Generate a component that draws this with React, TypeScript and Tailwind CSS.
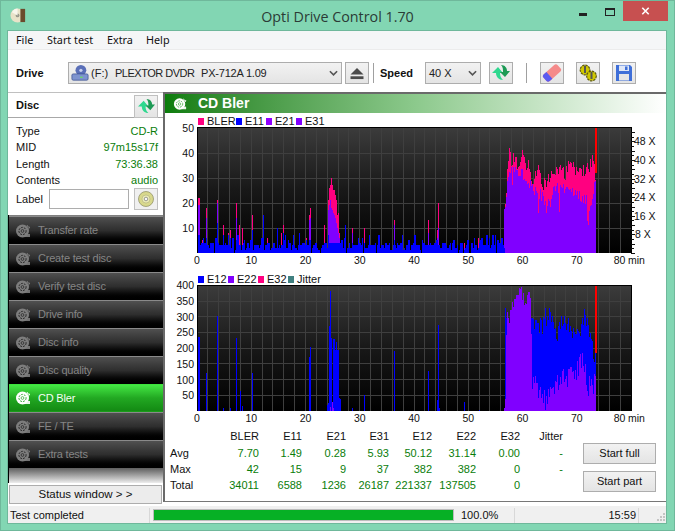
import React from 'react';

const UI_FONT = { fontFamily: '"Liberation Sans", Arial, sans-serif' };

// Plot is 434px wide, one column per pixel. x is a screen coordinate.
const PLOT_LEFT = 197;
const PLOT_W = 434;

function makeRandom(seed: number) {
  let s = seed;
  return () => {
    s = (s * 1664525 + 1013904223) % 4294967296;
    return s / 4294967296;
  };
}

function lerp(points: number[][], x: number) {
  for (let i = 1; i < points.length; i++) {
    if (x <= points[i][0]) {
      const [x0, y0] = points[i - 1];
      const [x1, y1] = points[i];
      return y0 + ((y1 - y0) * (x - x0)) / (x1 - x0);
    }
  }
  return points[points.length - 1][1];
}

// Left half of each graph was read off at 165 + zx / 3, right half at 425 + zx / 3
const L = (zx: number) => Math.round(165 + zx / 3 - PLOT_LEFT);
const R = (zx: number) => Math.round(425 + zx / 3 - PLOT_LEFT);

function blankSeries() {
  return new Array(PLOT_W).fill(0) as number[];
}

function put(series: number[], col: number, value: number) {
  if (col >= 0 && col < PLOT_W) series[col] = Math.max(series[col], value);
}

function buildBler() {
  const rand = makeRandom(41);
  const pink = blankSeries();
  const purple = blankSeries();
  const blue = blankSeries();
  const end = R(238);
  for (let c = 0; c < end; c += 1) {
    const r = rand();
    const v = r < 0.08 ? 0 : r < 0.55 ? 1 + rand() * 2 : r < 0.9 ? 3 + rand() : 5 + rand() * 2;
    put(blue, c, Math.round(v));
    if (rand() > 0.5) put(blue, c + 1, Math.round(v));
  }
  const spikes: number[][] = [
    [100, 22, 19, 7], [103, 22, 19, 7], [112, 5, 2, 2], [124, 18, 14, 6], [155, 16, 12, 12], [157, 21, 20, 6],
    [175, 11, 3, 7], [182, 3, 2, 3], [190, 8, 3, 7], [196, 9, 5, 6], [212, 9, 7, 5], [214, 20, 14, 5],
    [223, 11, 2, 3], [232, 10, 2, 3], [260, 15, 9, 9], [295, 5, 2, 15], [307, 6, 2, 4], [335, 4, 2, 10],
    [347, 8, 2, 3], [355, 11, 3, 8], [385, 3, 2, 7], [403, 3, 2, 8], [423, 6, 2, 5], [433, 15, 13, 5],
    [436, 18, 14, 5], [478, 11, 3, 4], [540, 3, 2, 11], [560, 10, 8, 4], [580, 3, 2, 6], [598, 10, 2, 4],
    [688, 13, 11, 5], [712, 3, 2, 7],
  ];
  spikes.forEach(([zx, a, b, c]) => {
    put(pink, L(zx), a);
    put(purple, L(zx), b);
    put(blue, L(zx), c);
  });
  const hump = [[489, 21, 17], [492, 26, 19], [495, 27, 21], [498, 30, 18], [501, 27, 17], [504, 25, 16], [507, 25, 15], [510, 23, 14], [513, 21, 12], [516, 15, 10], [519, 16, 8], [522, 8, 6]];
  hump.forEach(([zx, a, b]) => {
    put(pink, L(zx), a);
    put(purple, L(zx), b);
    put(blue, L(zx), 4);
  });
  [[10, 13, 8], [40, 20, 10], [37, 9, 6], [118, 4, 2], [160, 6, 2]].forEach(([zx, a, b]) => {
    put(pink, R(zx), a);
    put(purple, R(zx), b);
  });
  const pinkEnv = [[238, 18], [242, 23], [247, 33], [253, 42], [258, 38], [270, 38], [280, 37], [290, 40], [300, 37], [315, 34], [322, 30], [330, 33], [345, 33], [355, 27], [365, 30], [380, 33], [395, 32], [410, 37], [420, 32], [440, 38], [450, 34], [470, 33], [485, 33], [500, 38], [510, 32]];
  const purpleEnv = [[238, 17], [250, 32], [280, 33], [300, 30], [320, 26], [330, 24], [350, 23], [365, 17], [380, 24], [400, 26], [430, 25], [450, 23], [480, 22], [500, 17], [508, 27], [512, 31]];
  for (let zx = 238; zx <= 512; zx += 3) {
    put(pink, R(zx), lerp(pinkEnv, zx) + (rand() - 0.6) * 6);
    const dip = rand() > 0.9 ? rand() * 9 : 0;
    put(purple, R(zx), lerp(purpleEnv, zx) + (rand() - 0.5) * 5 - dip);
  }
  return { pink, purple, blue };
}

function buildE12() {
  const rand = makeRandom(77);
  const blue = blankSeries();
  const purple = blankSeries();
  const spikes = [[100, 237], [103, 237], [124, 122], [157, 303], [175, 8], [196, 8], [213, 232], [224, 65], [232, 15], [260, 122], [433, 172], [436, 205], [486, 20], [489, 25], [491, 270], [494, 370], [496, 382], [499, 232], [503, 230], [507, 228], [510, 195], [513, 220], [516, 195], [519, 195], [522, 40], [525, 38], [562, 8], [598, 52], [688, 190]];
  spikes.forEach(([zx, v]) => put(blue, L(zx), v));
  [[495, 12], [502, 30], [505, 8]].forEach(([zx, v]) => put(purple, L(zx), v));
  [[10, 128], [37, 35], [40, 275], [43, 8], [118, 28], [163, 2]].forEach(([zx, v]) => put(blue, R(zx), v));
  const purpleEnv = [[238, 20], [242, 40], [245, 330], [250, 290], [265, 345], [275, 370], [290, 380], [300, 350], [315, 375], [318, 320], [320, 105], [335, 80], [350, 50], [365, 20], [380, 70], [400, 95], [420, 105], [440, 110], [460, 140], [470, 170], [490, 80], [510, 85]];
  const blueEnv = [[238, 30], [241, 335], [250, 300], [316, 300], [318, 300], [330, 290], [345, 270], [372, 320], [385, 270], [400, 260], [420, 290], [440, 270], [460, 230], [472, 320], [490, 260], [510, 185]];
  for (let zx = 238; zx <= 512; zx += 3) {
    put(purple, R(zx), lerp(purpleEnv, zx) + (rand() - 0.5) * (zx < 318 ? 40 : 70));
    if (zx < 250 || zx > 316) put(blue, R(zx), lerp(blueEnv, zx) + (rand() - 0.6) * 70);
  }
  return { blue, purple };
}

const bler = buildBler();
const e12 = buildE12();

function barsPath(series: number[], x0: number, base: number, scale: number) {
  let d = '';
  series.forEach((v, c) => {
    if (v > 0) {
      const h = Math.round(v * scale);
      d += `M${x0 + c} ${base - h}h1v${h}h-1z`;
    }
  });
  return d;
}

interface GraphProps {
  height: number;
  top: number;
  bottom: number;
  yTicks: { label: string; value: number }[];
  scale: number;
  gridStep: number;
  speedAxis?: boolean;
  series: { color: string; data: number[] }[];
  redTo: number;
  gradientId: string;
}

function Graph({ height, top, bottom, yTicks, scale, gridStep, speedAxis, series, redTo, gradientId }: GraphProps) {
  const x0 = PLOT_LEFT - 165;
  const xAt = (min: number) => x0 + (min * PLOT_W) / 80;
  const vertical = Array.from({ length: 39 }, (_, i) => (i + 1) * 2);
  const horizontal: number[] = [];
  for (let y = bottom - gridStep; y > top + 2; y -= gridStep) horizontal.push(y);
  return (
    <svg width={501} height={height} className="block overflow-visible" style={{ fontFamily: '"Liberation Sans", Arial, sans-serif' }}>
      <defs>
        <linearGradient id={gradientId} x1="0" y1="0" x2="0" y2="1">
          <stop offset="0" stopColor="#3c3c3c" />
          <stop offset="0.5" stopColor="#181818" />
          <stop offset="1" stopColor="#000000" />
        </linearGradient>
      </defs>
      <rect x={x0} y={top} width={PLOT_W} height={bottom - top} fill={`url(#${gradientId})`} />
      <g stroke="#3f3f3f" strokeWidth="1" shapeRendering="crispEdges">
        {vertical.map(m => <line key={m} x1={xAt(m)} x2={xAt(m)} y1={top} y2={bottom} />)}
        {horizontal.map(y => <line key={y} x1={x0} x2={x0 + PLOT_W} y1={y} y2={y} />)}
      </g>
      <g shapeRendering="crispEdges">
        {series.map(s => <path key={s.color} d={barsPath(s.data, x0, bottom, scale)} fill={s.color} />)}
        <rect x={x0 + 398} y={top} width={2} height={redTo - top} fill="#ff0000" />
        <line x1={x0} x2={x0 + PLOT_W} y1={top} y2={top} stroke="#000" />
        <line x1={x0} x2={x0} y1={top} y2={bottom} stroke="#000" />
        <line x1={x0 + PLOT_W} x2={x0 + PLOT_W} y1={top} y2={bottom} stroke="#000" />
      </g>
      {yTicks.map(t => (
        <text key={t.label} x={x0 - 3} y={bottom - t.value * scale + 4} textAnchor="end" fontSize="10.5" fill="#111">{t.label}</text>
      ))}
      {[0, 10, 20, 30, 40, 50, 60, 70].map(m => (
        <text key={m} x={xAt(m)} y={bottom + 11} textAnchor="middle" fontSize="10.5" fill="#111">{m}</text>
      ))}
      <text x={xAt(80) - 11.5} y={bottom + 11} fontSize="10.5" fill="#111" textAnchor="middle">80</text>
      <text x={xAt(80) + 5.5} y={bottom + 11} fontSize="10.5" fill="#111" textAnchor="middle">min</text>
      {speedAxis && (
        <g>
          <g stroke="#111" shapeRendering="crispEdges">
            {Array.from({ length: 27 }, (_, i) => {
              const y = Math.round(bottom - i * 4.65);
              return <line key={i} x1={x0 + PLOT_W} x2={x0 + PLOT_W + (i % 2 === 0 ? 4 : 3)} y1={y} y2={y} />;
            })}
          </g>
          {[8, 16, 24, 32, 40, 48].map(v => (
            <text key={v} x={x0 + PLOT_W + (v === 8 ? 4 : 3)} y={bottom - v * 2.325 + 4} fontSize="10.5" fill="#111">{v} X</text>
          ))}
        </g>
      )}
    </svg>
  );
}

function Legend({ items }: { items: { label: string; color: string; width: number }[] }) {
  return (
    <div className="flex h-[12px] items-center pl-[33px] text-[11px] text-[#111]">
      {items.map(item => (
        <div key={item.label} className="flex items-center" style={{ width: item.width }}>
          <span className="mr-[3px] h-[7px] w-[6px]" style={{ backgroundColor: item.color }} />
          <span>{item.label}</span>
        </div>
      ))}
    </div>
  );
}

function DiscIcon({ tone, className }: { tone: 'grey' | 'white'; className?: string }) {
  const main = tone === 'white' ? '#ffffff' : '#7d7d7d';
  const inner = tone === 'white' ? '#3fae3f' : '#2a2a2a';
  return (
    <svg viewBox="0 0 16 16" className={className}>
      <circle cx="7.5" cy="8" r="6.5" fill={main} />
      <circle cx="7.5" cy="8" r="3.6" fill="none" stroke={inner} strokeWidth="1" strokeDasharray="2 1" />
      <circle cx="7.5" cy="8" r="1.4" fill={main} stroke={inner} strokeWidth="0.8" />
      <path d="M10 11h5v3h-5z" fill={main} opacity="0.9" />
      <path d="M12 2l1 2 2 .3-1.5 1.4" fill="none" stroke={main} strokeWidth="1" />
    </svg>
  );
}

function RefreshArrows({ className }: { className?: string }) {
  return (
    <svg viewBox="0 0 20 18" className={className}>
      <path d="M1 9L7 3L12 9H9C9 12 10 14 12 16C8 16 5 13 5 9Z" fill="#2fd88f" />
      <path d="M10 1C14 1 16 4 16 7H19L14 13L9 8H12C12 5 12 3 10 1Z" fill="#1d9a55" />
    </svg>
  );
}

function ToolButton({ children, className }: { children: React.ReactNode; className?: string }) {
  return (
    <button className={`flex h-[21px] w-[24px] items-center justify-center border border-[#adadad] bg-gradient-to-b from-[#f2f2f2] to-[#e4e4e4] ${className ?? ''}`}>
      {children}
    </button>
  );
}

function Chevron() {
  return (
    <svg viewBox="0 0 10 6" className="h-[6px] w-[9px]">
      <path d="M1 1l4 4 4-4" fill="none" stroke="#555" strokeWidth="1.800" />
    </svg>
  );
}

const navItems = ['Transfer rate', 'Create test disc', 'Verify test disc', 'Drive info', 'Disc info', 'Disc quality', 'CD Bler', 'FE / TE', 'Extra tests'];

const statRows = [
  ['', 'BLER', 'E11', 'E21', 'E31', 'E12', 'E22', 'E32', 'Jitter'],
  ['Avg', '7.70', '1.49', '0.28', '5.93', '50.12', '31.14', '0.00', '-'],
  ['Max', '42', '15', '9', '37', '382', '382', '0', '-'],
  ['Total', '34011', '6588', '1236', '26187', '221337', '137505', '0', ''],
];

export default function App() {
  return (
    <div className="flex h-[531px] w-[675px] flex-col overflow-hidden border border-[#6fb89b] bg-[#82d6b3] text-[11px] text-[#111]" style={UI_FONT}>
      {/* Title bar */}
      <div className="relative flex h-[29px] shrink-0 items-center justify-center">
        <svg viewBox="0 0 18 18" className="absolute left-[9px] top-[5px] h-[18px] w-[17px]">
          <circle cx="8" cy="9.500" r="7.500" fill="#e8e2c8" />
          <path d="M11 2.500h5v14h-5z" fill="#6a4a2c" />
          <circle cx="8" cy="9.500" r="2" fill="#9a9a8c" />
          <path d="M8 2a7.500 7.500 0 0 0-6 4l6 3.500z" fill="#f8f6ec" />
        </svg>
        <span className="mt-[2px] text-[14.3px] text-[#2b3b36]" style={{ fontFamily: '"Open Sans", sans-serif' }}>Opti Drive Control 1.70</span>
        <div className="absolute right-[6px] top-0 flex items-start">
          <span className="mr-[18px] mt-[12px] h-[3px] w-[8px] bg-[#222]" />
          <span className="mr-[8px] mt-[7px] h-[8px] w-[10px] border border-t-2 border-[#222]" />
          <div className="flex h-[20px] w-[45px] items-center justify-center bg-[#c75050]">
            <svg viewBox="0 0 10 10" className="h-[8px] w-[9px]">
              <path d="M1 1l8 8M9 1l-8 8" stroke="#fff" strokeWidth="2" />
            </svg>
          </div>
        </div>
      </div>

      {/* Client area */}
      <div className="ml-[6px] mr-[7px] flex min-h-0 flex-1 flex-col border border-[#6fb89b] bg-white">
        {/* Menu */}
        <div className="flex h-[19px] shrink-0 items-center border-b border-[#ececec] bg-[#f5f6f7] pl-[8px] text-[10.8px]" style={{ fontFamily: '"Noto Sans", sans-serif' }}>
          <span className="w-[31px]">File</span>
          <span className="w-[60px]">Start test</span>
          <span className="w-[39px]">Extra</span>
          <span>Help</span>
        </div>

        {/* Toolbar */}
        <div className="flex h-[42px] shrink-0 items-center pl-[8px] pt-[4px]">
          <span className="w-[52px] font-bold">Drive</span>
          <div className="flex h-[22px] w-[274px] items-center border border-[#adadad] bg-gradient-to-b from-[#f2f2f2] to-[#e4e4e4] pl-[2px] pr-[3px]">
            <svg viewBox="0 0 20 20" className="mr-[2px] h-[18px] w-[18px]">
              <circle cx="11" cy="7" r="6" fill="#5a6fb8" />
              <circle cx="11" cy="7" r="1.800" fill="#c7d0ee" />
              <rect x="1" y="11" width="18" height="7" rx="1.500" fill="#7d93cf" stroke="#3b4f8e" strokeWidth="0.800" />
              <rect x="10" y="14" width="3" height="1.500" fill="#6ad66a" />
            </svg>
            <span className="w-[24px] text-[#222]">(F:)</span>
            <span className="w-[86px] tracking-[-0.5px] text-[#222]">PLEXTOR DVDR</span>
            <span className="flex-1 tracking-[-0.2px] text-[#222]">PX-712A 1.09</span>
            <Chevron />
          </div>
          <ToolButton className="ml-[3px] h-[22px]">
            <svg viewBox="0 0 16 14" className="h-[13px] w-[16px]">
              <path d="M8 1l7 7H1z" fill="#4a4a4a" />
              <rect x="1" y="10" width="14" height="3" fill="#4a4a4a" />
            </svg>
          </ToolButton>
          <span className="ml-[4px] h-[20px] w-[1px] bg-[#a0a0a0]" />
          <span className="ml-[6px] w-[45px] font-bold">Speed</span>
          <div className="flex h-[22px] w-[56px] items-center justify-between border border-[#adadad] bg-gradient-to-b from-[#f2f2f2] to-[#e4e4e4] pl-[3px] pr-[3px] text-[#222]">
            <span>40 X</span>
            <Chevron />
          </div>
          <ToolButton className="ml-[8px] h-[22px]"><RefreshArrows className="h-[18px] w-[20px]" /></ToolButton>
          <span className="ml-[13px] h-[20px] w-[1px] bg-[#a0a0a0]" />
          <ToolButton className="ml-[13px] h-[22px]">
            <svg viewBox="0 0 20 18" className="h-[18px] w-[20px]">
              <g transform="rotate(-42 10 9)">
                <rect x="0.500" y="4.500" width="19" height="9" rx="2.500" fill="#f58a8a" />
                <path d="M3 4.500h3.500v9H3a2.500 2.500 0 0 1-2.500-2.500V7A2.500 2.500 0 0 1 3 4.500z" fill="#5a5af0" />
              </g>
            </svg>
          </ToolButton>
          <ToolButton className="ml-[12px] h-[22px]">
            <svg viewBox="0 0 20 18" className="h-[18px] w-[20px]">
              <circle cx="7" cy="6" r="4.800" fill="#d0c800" stroke="#5e5a10" strokeWidth="1.200" strokeDasharray="2.400 0.800" />
              <circle cx="13.500" cy="12" r="4.800" fill="#d0c800" stroke="#5e5a10" strokeWidth="1.200" strokeDasharray="2.400 0.800" />
              <rect x="6" y="2" width="2" height="7" fill="#555" />
              <rect x="12.500" y="8" width="2" height="7" fill="#555" />
            </svg>
          </ToolButton>
          <ToolButton className="ml-[12px] h-[22px]">
            <svg viewBox="0 0 18 18" className="h-[18px] w-[18px]">
              <path d="M1 1h14l2 2v14H1z" fill="#3f6fd8" />
              <rect x="4" y="1.500" width="10" height="5.500" fill="#dfe7f7" />
              <rect x="10" y="2.500" width="2.500" height="3.500" fill="#3f6fd8" />
              <rect x="4" y="10" width="10" height="6.500" fill="#e6e6e6" />
            </svg>
          </ToolButton>
        </div>

        {/* Body */}
        <div className="flex min-h-0 flex-1">
          {/* Left column */}
          <div className="flex w-[155px] shrink-0 flex-col">
            <div className="flex-1 border-t border-[#c0c0c0]">
              <div className="flex h-[25px] items-center justify-between border-b border-[#a8a8a8] pl-[8px] pr-[5px]">
                <span className="font-bold">Disc</span>
                <ToolButton className="mt-[2px] h-[23px] w-[24px] border-[#c0c0c0]"><RefreshArrows className="h-[17px] w-[19px]" /></ToolButton>
              </div>
              <div className="flex flex-col pl-[8px] pr-[5px] pt-[5px]">
                {[
                  ['Type', 'CD-R'],
                  ['MID', '97m15s17f'],
                  ['Length', '73:36.38'],
                  ['Contents', 'audio'],
                ].map(([k, v]) => (
                  <div key={k} className="flex h-[16.300px] items-center justify-between">
                    <span>{k}</span>
                    <span className="text-[#0a7d0a]">{v}</span>
                  </div>
                ))}
                <div className="flex items-center">
                  <span className="w-[33px]">Label</span>
                  <span className="h-[20px] w-[81px] border border-[#adadad] bg-white" />
                  <button className="ml-[5px] flex h-[22px] w-[24px] items-center justify-center border border-[#c0c0c0] bg-[#f0f0f0]">
                    <svg viewBox="0 0 16 16" className="h-[16px] w-[16px]">
                      <circle cx="8" cy="8" r="7.500" fill="#d8d88c" stroke="#8a8a60" strokeWidth="0.700" />
                      <circle cx="8" cy="8" r="4" fill="#eeeeb8" stroke="#a0a070" strokeWidth="0.500" />
                      <circle cx="8" cy="8" r="1.800" fill="#f8f8f8" stroke="#777" strokeWidth="0.700" />
                    </svg>
                  </button>
                </div>
              </div>
            </div>
            <div className="border-l border-black bg-[#808080] pt-[1px]">
              {navItems.map(name => {
                const active = name === 'CD Bler';
                return (
                  <div
                    key={name}
                    className={
                      active
                        ? 'flex h-[28px] items-center border-b border-t border-[#1a9c1a] border-t-[#3ce33c] bg-gradient-to-b from-[#44e844] via-[#22a822] to-[#138a13] pl-[6px] text-[#f4fff4]'
                        : 'flex h-[28px] items-center border-t border-[#8a8a8a] bg-gradient-to-b from-[#505050] via-[#2e2e2e] to-[#000000] pl-[6px] text-[#858585]'
                    }
                  >
                    <DiscIcon tone={active ? 'white' : 'grey'} className="mr-[7px] h-[16px] w-[16px] shrink-0" />
                    <span className="tracking-[-0.2px]">{name}</span>
                  </div>
                );
              })}
              <div className="h-[15px] bg-gradient-to-b from-[#5f5f5f] to-[#eeeeee]" />
            </div>
            <div className="bg-white px-[1px] pb-[2px] pt-[2px]">
              <button className="h-[19px] w-[153px] border border-[#adadad] bg-[#ececec] text-[11.5px] text-[#111]">Status window &gt; &gt;</button>
            </div>
          </div>

          {/* Graph panel */}
          <div className="mb-[4px] flex min-w-0 flex-1 flex-col border-b border-l-2 border-t-2 border-[#6a6a6a] border-b-[#777]">
            <div className="flex h-[19px] shrink-0 items-center bg-gradient-to-r from-[#0a7d0a] via-[#8cc98c] to-white pl-[8px]">
              <DiscIcon tone="white" className="h-[14px] w-[14px]" />
              <span className="ml-[11px] text-[14px] font-bold text-white">CD Bler</span>
            </div>
            <div className="pt-[2px]">
              <Legend items={[
                { label: 'BLER', color: '#ff0080', width: 38 },
                { label: 'E11', color: '#0000ff', width: 30 },
                { label: 'E21', color: '#9000ff', width: 30 },
                { label: 'E31', color: '#8000ff', width: 30 },
              ]} />
            </div>
            <Graph
              height={146}
              top={0}
              bottom={126}
              gradientId="blerBack"
              scale={2.5}
              gridStep={25}
              speedAxis
              redTo={46}
              yTicks={[10, 20, 30, 40, 50].map(v => ({ label: String(v), value: v }))}
              series={[
                { color: '#ff0080', data: bler.pink },
                { color: '#8000ff', data: bler.purple },
                { color: '#0000ff', data: bler.blue },
              ]}
            />
            <Legend items={[
              { label: 'E12', color: '#0000ff', width: 30 },
              { label: 'E22', color: '#8000ff', width: 30 },
              { label: 'E32', color: '#ff0080', width: 30 },
              { label: 'Jitter', color: '#408080', width: 40 },
            ]} />
            <Graph
              height={142}
              top={0}
              bottom={126}
              gradientId="e12Back"
              scale={0.3143}
              gridStep={15.7}
              redTo={68}
              yTicks={[50, 100, 150, 200, 250, 300, 350, 400].map(v => ({ label: String(v), value: v }))}
              series={[
                { color: '#0000ff', data: e12.blue },
                { color: '#8000ff', data: e12.purple },
              ]}
            />
            <div className="flex pl-[5px]">
              <div className="mt-[1px] grid grid-cols-[45px_44px_43px_44px_43px_43px_44px_44px_43px] grid-rows-[17px_16px_16px_16px] items-center">
                {statRows.map((row, r) =>
                  row.map((cell, c) => (
                    <span
                      key={`${r}-${c}`}
                      className={c === 0 ? '' : r === 0 ? 'text-right' : 'text-right text-[#0a7d0a]'}
                    >
                      {cell}
                    </span>
                  )),
                )}
              </div>
              <div className="ml-[20px] mt-[16px] flex flex-col gap-[7px]">
                <button className="h-[21px] w-[73px] border border-[#adadad] bg-gradient-to-b from-[#f2f2f2] to-[#e4e4e4]">Start full</button>
                <button className="h-[21px] w-[73px] border border-[#adadad] bg-gradient-to-b from-[#f2f2f2] to-[#e4e4e4]">Start part</button>
              </div>
            </div>
          </div>
        </div>

        {/* Status bar */}
        <div className="flex h-[17px] shrink-0 items-center bg-[#f0f0f0] pt-[1px]">
          <span className="w-[141px] pl-[2px]">Test completed</span>
          <span className="h-[15px] w-[1px] bg-[#d8d8d8]" />
          <div className="ml-[3px] h-[12px] w-[301px] border border-[#bcbcbc] bg-[#06b025]" />
          <span className="ml-[7px] w-[53px]">100.0%</span>
          <span className="h-[15px] w-[1px] bg-[#d8d8d8]" />
          <span className="w-[121px] text-right">15:59</span>
          <span className="ml-[2px] h-[15px] w-[1px] bg-[#d8d8d8]" />
          <svg viewBox="0 0 10 10" className="ml-[17px] mt-[4px] h-[10px] w-[10px]">
            <path d="M7 1h2v2H7zM4 4h2v2H4zM7 4h2v2H7zM1 7h2v2H1zM4 7h2v2H4zM7 7h2v2H7z" fill="#c4c4c4" />
          </svg>
        </div>
      </div>
      <div className="h-[6px] shrink-0" />
    </div>
  );
}
